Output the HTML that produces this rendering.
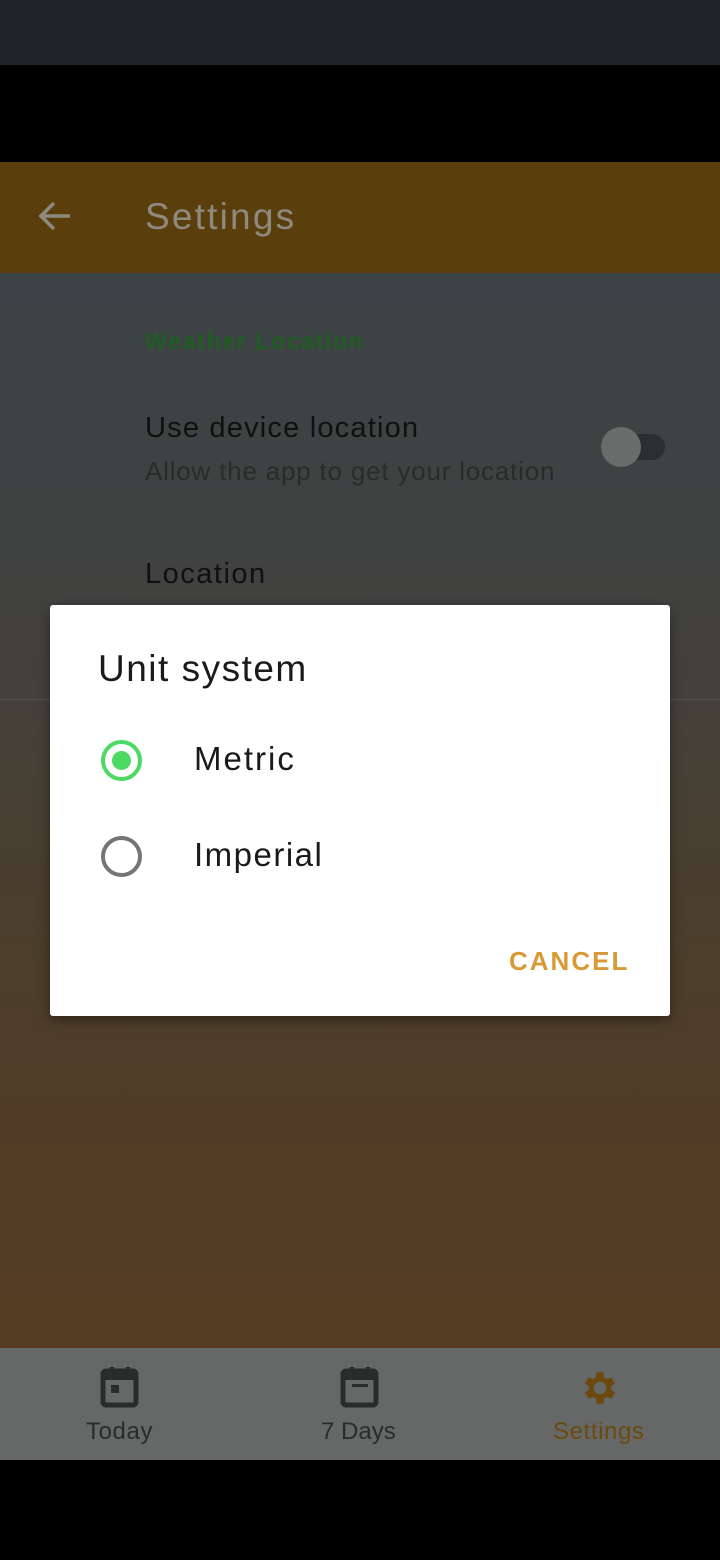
<!DOCTYPE html>
<html><head><meta charset="utf-8"><style>
*{margin:0;padding:0;box-sizing:border-box}
body{width:720px;height:1560px;position:relative;overflow:hidden;background:#000;font-family:"Liberation Sans",sans-serif}
.abs{position:absolute}
</style></head><body>
<div class="abs" style="left:0;top:0;width:720px;height:65px;background:#212329"></div>
<div class="abs" style="left:0;top:65px;width:720px;height:97px;background:#000"></div>
<div class="abs" style="left:0;top:162px;width:720px;height:111px;background:#5a3f0c"></div>
<svg class="abs" style="left:36px;top:198px" width="38" height="36" viewBox="0 0 38 36"><path d="M34 18H6M18 5L5 18l13 13" stroke="#8f8a80" stroke-width="3.5" fill="none"/></svg>
<div class="abs" style="left:145px;top:196px;font-size:37px;color:#8f8a80;letter-spacing:2.2px">Settings</div>
<div class="abs" style="left:0;top:273px;width:720px;height:1075px;background:linear-gradient(180deg,#3c4346 0%,#414140 30%,#4a3e2c 60%,#523c24 85%,#533c22 100%)"></div>
<div class="abs" style="left:145px;top:328px;font-size:23px;color:#1f5d23;font-weight:bold;letter-spacing:1.7px">Weather Location</div>
<div class="abs" style="left:145px;top:412px;font-size:29px;color:#0f1010;letter-spacing:1.2px">Use device location</div>
<div class="abs" style="left:145px;top:456px;font-size:26px;color:#2a2b2b;letter-spacing:0.8px">Allow the app to get your location</div>
<div class="abs" style="left:603px;top:434px;width:62px;height:26px;border-radius:13px;background:#2c2e2f"></div>
<div class="abs" style="left:601px;top:427px;width:40px;height:40px;border-radius:50%;background:#6a6b6b"></div>
<div class="abs" style="left:145px;top:558px;font-size:29px;color:#0f1010;letter-spacing:1.5px">Location</div>
<div class="abs" style="left:0;top:699px;width:720px;height:1px;background:#555"></div>
<div class="abs" style="left:50px;top:605px;width:620px;height:411px;background:#fff;border-radius:3px;box-shadow:0 4px 12px rgba(0,0,0,.4)"></div>
<div class="abs" style="left:98px;top:648px;font-size:37px;color:#1a1a1a;letter-spacing:1.5px">Unit system</div>
<div class="abs" style="left:101px;top:740px;width:41px;height:41px;border-radius:50%;border:4px solid #4cd964"></div>
<div class="abs" style="left:112px;top:751px;width:19px;height:19px;border-radius:50%;background:#4cd964"></div>
<div class="abs" style="left:194px;top:740px;font-size:33px;color:#1a1a1a;letter-spacing:2px">Metric</div>
<div class="abs" style="left:101px;top:836px;width:41px;height:41px;border-radius:50%;border:4px solid #757575"></div>
<div class="abs" style="left:194px;top:836px;font-size:33px;color:#1a1a1a;letter-spacing:1.5px">Imperial</div>
<div class="abs" style="left:509px;top:946px;font-size:26px;color:#d89a36;font-weight:bold;letter-spacing:2px">CANCEL</div>
<div class="abs" style="left:0;top:1348px;width:720px;height:112px;background:#656867"></div>
<svg class="abs" style="left:100px;top:1366px" width="40" height="42" viewBox="0 0 40 42"><rect x="3" y="5" width="33" height="34" rx="3" fill="none" stroke="#2a2c2c" stroke-width="5"/><rect x="3" y="5" width="33" height="9" fill="#2a2c2c"/><rect x="10" y="1" width="4" height="7" fill="#2a2c2c"/><rect x="26" y="1" width="4" height="7" fill="#2a2c2c"/><rect x="11" y="19" width="8" height="8" fill="#2a2c2c"/></svg>
<div class="abs" style="left:86px;top:1418px;font-size:24px;color:#2a2c2c;letter-spacing:0.6px">Today</div>
<svg class="abs" style="left:340px;top:1366px" width="40" height="42" viewBox="0 0 40 42"><rect x="3" y="5" width="33" height="34" rx="3" fill="none" stroke="#2a2c2c" stroke-width="5"/><rect x="3" y="5" width="33" height="9" fill="#2a2c2c"/><rect x="10" y="1" width="4" height="7" fill="#2a2c2c"/><rect x="26" y="1" width="4" height="7" fill="#2a2c2c"/><rect x="12" y="18" width="16" height="3" fill="#2a2c2c"/></svg>
<div class="abs" style="left:321px;top:1418px;font-size:24px;color:#2a2c2c">7 Days</div>
<svg class="abs" style="left:579px;top:1367px" width="42" height="42" viewBox="0 0 24 24"><path fill="#6a4a0e" d="M19.4 13a7.5 7.5 0 000-2l2.1-1.6-2-3.5-2.5 1a7 7 0 00-1.7-1L15 3h-4l-.4 2.9a7 7 0 00-1.7 1l-2.5-1-2 3.5L6.6 11a7.5 7.5 0 000 2l-2.1 1.6 2 3.5 2.5-1a7 7 0 001.7 1L11 21h4l.4-2.9a7 7 0 001.7-1l2.5 1 2-3.5zM13 15.5a3.5 3.5 0 110-7 3.5 3.5 0 010 7z" transform="translate(-1 0)"/></svg>
<div class="abs" style="left:553px;top:1418px;font-size:24px;color:#6a4a0e;letter-spacing:0.6px">Settings</div>
</body></html>
